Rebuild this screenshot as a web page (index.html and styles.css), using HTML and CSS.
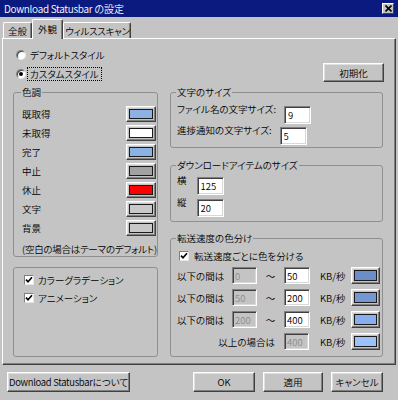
FILE: index.html
```html
<!DOCTYPE html>
<html lang="ja">
<head>
<meta charset="utf-8">
<title>Download Statusbar の設定</title>
<link rel="stylesheet" href="styles.css">
</head>
<body>
<div class="window">
  <div class="titlebar">
    <span class="title"><span class="lat">Download Statusbar</span> の設定</span>
    <span class="close"><svg width="7" height="7" viewBox="0 0 7 7"><path d="M0.5 0.5 L6.5 6.5 M6.5 0.5 L0.5 6.5" stroke="#000" stroke-width="1.6"/></svg></span>
  </div>
  <div class="tabs">
    <div class="tab t1">全般</div>
    <div class="tab t2 active">外観</div>
    <div class="tab t3">ウィルススキャン</div>
  </div>
  <div class="panel">
    <div class="top-row">
      <div class="radios">
        <div class="radio-row"><span class="radio"></span><span class="rlabel">デフォルトスタイル</span></div>
        <div class="radio-row"><span class="radio checked"></span><span class="rlabel focus">カスタムスタイル</span></div>
      </div>
      <button class="btn reset">初期化</button>
    </div>
    <div class="columns">
      <div class="col-left">
        <fieldset class="group g-colors">
          <legend>色調</legend>
          <div class="crow"><span>既取得</span><span class="cbtn"><span class="sw sw-blue"></span></span></div>
          <div class="crow"><span>未取得</span><span class="cbtn"><span class="sw sw-white"></span></span></div>
          <div class="crow"><span>完了</span><span class="cbtn"><span class="sw sw-blue"></span></span></div>
          <div class="crow"><span>中止</span><span class="cbtn"><span class="sw sw-gray"></span></span></div>
          <div class="crow"><span>休止</span><span class="cbtn"><span class="sw sw-red"></span></span></div>
          <div class="crow"><span>文字</span><span class="cbtn"><span class="sw sw-face"></span></span></div>
          <div class="crow"><span>背景</span><span class="cbtn"><span class="sw sw-face"></span></span></div>
          <div class="note">(空白の場合はテーマのデフォルト)</div>
        </fieldset>
        <fieldset class="group g-opts">
          <div class="chk-row"><span class="chk"><svg width="8" height="8" viewBox="0 0 8 8"><path d="M1 3.6 L3 5.8 L7 1.2" fill="none" stroke="#000" stroke-width="1.6"/></svg></span><span>カラーグラデーション</span></div>
          <div class="chk-row"><span class="chk"><svg width="8" height="8" viewBox="0 0 8 8"><path d="M1 3.6 L3 5.8 L7 1.2" fill="none" stroke="#000" stroke-width="1.6"/></svg></span><span>アニメーション</span></div>
        </fieldset>
      </div>
      <div class="col-right">
        <fieldset class="group g-font">
          <legend>文字のサイズ</legend>
          <div class="frow"><span class="flabel">ファイル名の文字サイズ:</span><input class="field" type="text" value="9" readonly></div>
          <div class="frow"><span class="flabel">進捗通知の文字サイズ:</span><input class="field" type="text" value="5" readonly></div>
        </fieldset>
        <fieldset class="group g-item">
          <legend>ダウンロードアイテムのサイズ</legend>
          <div class="frow"><span class="flabel">横</span><input class="field" type="text" value="125" readonly></div>
          <div class="frow"><span class="flabel">縦</span><input class="field" type="text" value="20" readonly></div>
        </fieldset>
        <fieldset class="group g-speed">
          <legend>転送速度の色分け</legend>
          <div class="speed-grid">
            <div class="chk-row speed-chk"><span class="chk"><svg width="8" height="8" viewBox="0 0 8 8"><path d="M1 3.6 L3 5.8 L7 1.2" fill="none" stroke="#000" stroke-width="1.6"/></svg></span><span>転送速度ごとに色を分ける</span></div>

            <span class="slabel">以下の間は</span>
            <input class="field sfield" type="text" value="0" disabled>
            <span class="tilde">〜</span>
            <input class="field sfield" type="text" value="50" readonly>
            <span class="unit">KB/秒</span>
            <span class="cbtn sbtn"><span class="sw sw-s1"></span></span>

            <span class="slabel">以下の間は</span>
            <input class="field sfield" type="text" value="50" disabled>
            <span class="tilde">〜</span>
            <input class="field sfield" type="text" value="200" readonly>
            <span class="unit">KB/秒</span>
            <span class="cbtn sbtn"><span class="sw sw-s2"></span></span>

            <span class="slabel">以下の間は</span>
            <input class="field sfield" type="text" value="200" disabled>
            <span class="tilde">〜</span>
            <input class="field sfield" type="text" value="400" readonly>
            <span class="unit">KB/秒</span>
            <span class="cbtn sbtn"><span class="sw sw-s3"></span></span>

            <span class="slabel above">以上の場合は</span>
            <input class="field sfield" type="text" value="400" disabled>
            <span class="unit">KB/秒</span>
            <span class="cbtn sbtn"><span class="sw sw-s4"></span></span>
          </div>
        </fieldset>
      </div>
    </div>
  </div>
  <div class="footer">
    <button class="btn about"><span class="lat">Download Statusbar</span>について</button>
    <span class="spacer"></span>
    <button class="btn ok">OK</button>
    <button class="btn apply">適用</button>
    <button class="btn cancel">キャンセル</button>
  </div>
</div>
</body>
</html>
```

FILE: styles.css
```css
* { box-sizing: border-box; }

html, body {
  margin: 0;
  padding: 0;
  background: #c4c4c4;
}

body {
  font-family: "Noto Sans CJK JP", "Noto Sans", sans-serif;
  font-size: 9.5px;
  font-weight: 350;
  line-height: 12px;
  font-feature-settings: "palt";
  color: #000;
}

.lat { letter-spacing: -0.3px; }

.window {
  width: 398px;
  height: 400px;
  background: #c4c4c4;
  display: flex;
  flex-direction: column;
  overflow: hidden;
}

/* title bar */
.titlebar {
  height: 17px;
  flex: none;
  background: #0b1a7e;
  color: #fff;
  display: flex;
  align-items: center;
  justify-content: space-between;
  padding: 0 4px 0 4px;
}
.title { white-space: nowrap; font-size: 10px; }
.close {
  width: 12px;
  height: 11px;
  background: #c4c4c4;
  border: 1px solid;
  border-color: #fff #404040 #404040 #fff;
  display: flex;
  align-items: center;
  justify-content: center;
}

/* tabs */
.tabs {
  height: 21px;
  flex: none;
  display: flex;
  align-items: flex-end;
  padding-left: 3px;
}
.tab {
  height: 16px;
  display: flex;
  align-items: center;
  justify-content: center;
  border-top: 1px solid #fff;
  border-left: 1px solid #fff;
  border-right: 1px solid #404040;
  box-shadow: inset -1px 0 #808080;
  border-radius: 2px 2px 0 0;
  background: #c4c4c4;
  white-space: nowrap;
}
.t1 { width: 29px; }
.t2 { width: 31px; }
.t3 { width: 68px; letter-spacing: -0.3px; padding-left: 1px; }
.tab.active {
  height: 20px;
  margin-bottom: -1px;
  position: relative;
  z-index: 1;
  padding-bottom: 2px;
}

/* panel */
.panel {
  height: 327px;
  flex: none;
  margin: 0 2px;
  border: 1px solid;
  border-color: #fff #404040 #404040 #fff;
  box-shadow: inset -1px -1px #808080;
}

.top-row {
  display: flex;
  justify-content: space-between;
  align-items: flex-end;
  padding: 6px 11px 0 13px;
}
.radio-row {
  height: 19px;
  display: flex;
  align-items: center;
  gap: 1px;
}
.radio {
  width: 10px;
  height: 10px;
  border-radius: 50%;
  background: #fff;
  border: 1px solid;
  border-color: #808080 #e8e8e8 #e8e8e8 #808080;
  box-shadow: inset 1px 1px #404040;
  display: flex;
  align-items: center;
  justify-content: center;
}
.radio.checked::after {
  content: "";
  width: 4px;
  height: 4px;
  border-radius: 50%;
  background: #000;
}
.rlabel {
  padding: 0 2px;
  border: 1px solid transparent;
  line-height: 12px;
}
.rlabel.focus { border: 1px dotted #000; }

.btn {
  font: inherit;
  font-feature-settings: "palt";
  color: #000;
  background: #c4c4c4;
  height: 20px;
  padding: 0;
  border: 1px solid;
  border-color: #fff #404040 #404040 #fff;
  box-shadow: inset -1px -1px #808080, inset 1px 1px #e0e0e0;
  border-radius: 0;
  white-space: nowrap;
}
.reset { width: 61px; height: 19px; margin-bottom: 1px; }

/* columns */
.columns {
  display: flex;
  gap: 12px;
  padding: 3px 12px 0 10px;
}
.col-left {
  width: 145px;
  display: flex;
  flex-direction: column;
  gap: 10px;
}
.col-right {
  width: 213px;
  display: flex;
  flex-direction: column;
}

.group {
  margin: 0;
  min-width: 0;
  border: 1px solid #8f8f8f;
  border-radius: 3px;
}
.group legend {
  padding: 0 1px;
  margin-left: -1px;
  line-height: 12px;
}

.g-colors { height: 171px; padding: 8px 1px 0 8px; }
.g-opts { height: 90px; padding: 4px 0 0 10px; }
.g-font { height: 62px; padding: 5px 0 0 6px; }
.g-item { height: 63px; padding: 3px 0 0 6px; margin-top: 11px; }
.g-speed { height: 125px; padding: 6px 0 0 6px; margin-top: 10px; }

/* colour rows */
.crow {
  height: 16px;
  margin-bottom: 3px;
  display: flex;
  align-items: center;
  justify-content: space-between;
}
.crow:nth-of-type(7) { margin-bottom: 0; }
.note { margin-top: 7px; white-space: nowrap; letter-spacing: -0.25px; }

.cbtn {
  width: 30px;
  height: 16px;
  display: flex;
  padding: 2px;
  border: 1px solid;
  border-color: #fff #404040 #404040 #fff;
  box-shadow: inset -1px -1px #808080, inset 1px 1px #e0e0e0;
  background: #c4c4c4;
}
.sw { flex: 1; border: 1px solid #1a1a1a; }
.sw-blue { background: #8cb1e3; }
.sw-white { background: #fff; }
.sw-gray { background: #a2a2a2; }
.sw-red { background: #ff0000; }
.sw-face { background: #c8c8c8; }
.sw-s1 { background: #6c8ec7; }
.sw-s2 { background: #7598d2; }
.sw-s3 { background: #88aef0; }
.sw-s4 { background: #9bc2fa; }

/* checkboxes */
.chk-row {
  height: 16px;
  display: flex;
  align-items: center;
  gap: 4px;
  margin-bottom: 2px;
  white-space: nowrap;
}
.chk {
  width: 10px;
  height: 10px;
  flex: none;
  background: #fff;
  border: 1px solid;
  border-color: #808080 #e8e8e8 #e8e8e8 #808080;
  display: flex;
  align-items: center;
  justify-content: center;
}

/* fields */
.frow {
  display: flex;
  align-items: flex-start;
  gap: 8px;
}
.g-item .frow { gap: 10px; margin-bottom: 1px; }
.flabel { line-height: 12px; white-space: nowrap; }
.field {
  font: inherit;
  font-feature-settings: "palt";
  width: 27px;
  height: 18px;
  margin: 3px 0 0 0;
  padding: 0 0 0 3px;
  color: #000;
  background: #fff;
  border: 1px solid;
  border-color: #808080 #fff #fff #808080;
  box-shadow: inset 1px 1px #404040, inset -1px -1px #d8d8d8;
  border-radius: 0;
  outline: none;
}
.field:disabled {
  background: #c4c4c4;
  color: #8c8c8c;
  -webkit-text-fill-color: #8c8c8c;
}

/* speed grid */
.speed-grid {
  display: grid;
  grid-template-columns: 55px 25px 27px 26px 41px 29px;
  grid-auto-rows: 17px;
  grid-template-rows: 12px;
  row-gap: 5px;
  align-items: center;
}
.speed-chk {
  grid-column: 1 / -1;
  height: 12px;
  margin: 0 0 0 2px;
  gap: 5px;
}
.slabel { white-space: nowrap; }
.slabel.above {
  grid-column: 1 / 4;
  text-align: right;
  padding-right: 9px;
}
.sfield { width: 26px; height: 17px; margin: 0; padding-left: 2px; }
.speed-grid .sfield:nth-of-type(odd) { width: 25px; }
.tilde { text-align: center; }
.unit { padding-left: 10px; white-space: nowrap; }
.sbtn { width: 29px; height: 17px; }

/* footer */
.footer {
  display: flex;
  align-items: center;
  margin-top: 7px;
  padding: 0 15px 0 7px;
  gap: 8px;
}
.spacer { flex: 1; }
.about { width: 123px; }
.ok { width: 62px; }
.apply { width: 60px; }
.cancel { width: 52px; }
```
